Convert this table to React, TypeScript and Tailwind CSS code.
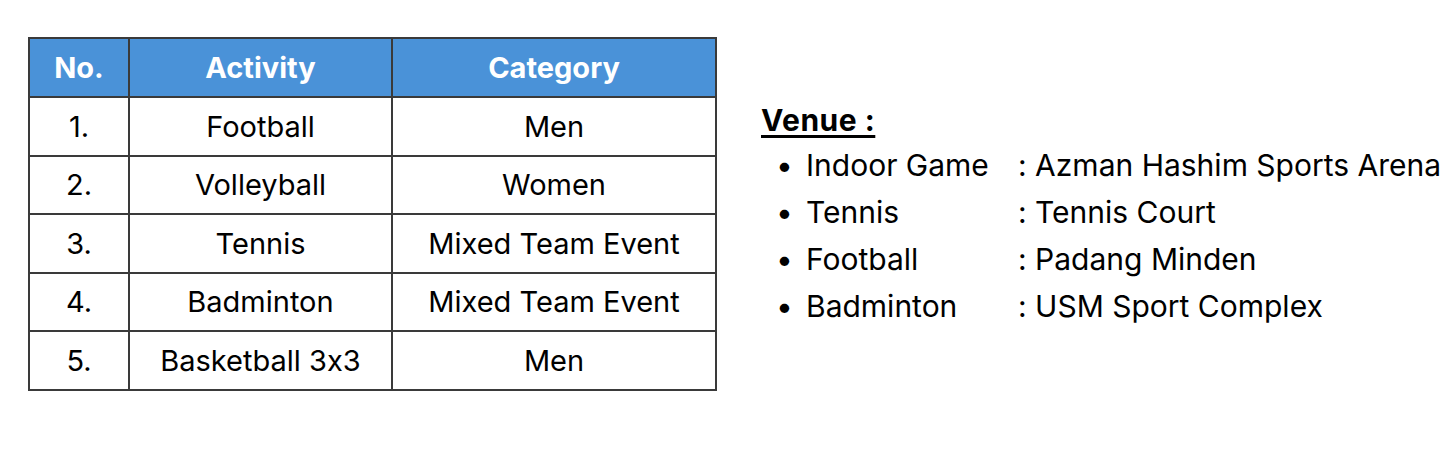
const rows = [
  { no: "1.", activity: "Football", category: "Men" },
  { no: "2.", activity: "Volleyball", category: "Women" },
  { no: "3.", activity: "Tennis", category: "Mixed Team Event" },
  { no: "4.", activity: "Badminton", category: "Mixed Team Event" },
  { no: "5.", activity: "Basketball 3x3", category: "Men" },
];

const venues = [
  { name: "Indoor Game", place: "Azman Hashim Sports Arena" },
  { name: "Tennis", place: "Tennis Court" },
  { name: "Football", place: "Padang Minden" },
  { name: "Badminton", place: "USM Sport Complex" },
];

export default function App() {
  return (
    <div
      className="flex h-[458px] w-[1454px] items-start overflow-hidden bg-white text-black [font-feature-settings:'calt'_0]"
      style={{ fontFamily: "Inter, 'Open Sans', sans-serif" }}
    >
      <table className="ml-[28px] mt-[37px] border-collapse border-2 border-[#3a3a3a] text-[29px]">
        <thead>
          <tr className="h-[59px] bg-[#4a92d8] text-white">
            <th className="w-[100px] border-2 border-[#3a3a3a] font-bold">No.</th>
            <th className="w-[263px] border-2 border-[#3a3a3a] font-bold">Activity</th>
            <th className="w-[324px] border-2 border-[#3a3a3a] font-bold">Category</th>
          </tr>
        </thead>
        <tbody>
          {rows.map((r) => (
            <tr key={r.no} className="h-[58.6px]">
              <td className="border-2 border-[#3a3a3a] text-center">{r.no}</td>
              <td className="border-2 border-[#3a3a3a] text-center">{r.activity}</td>
              <td className="border-2 border-[#3a3a3a] text-center">{r.category}</td>
            </tr>
          ))}
        </tbody>
      </table>

      <div className="ml-[44px] mt-[103px] flex flex-col text-[30px]">
        <div className="font-bold underline underline-offset-4 leading-[34px] tracking-[0.5px]">Venue :</div>
        <ul className="mt-[5px] flex flex-col">
          {venues.map((v) => (
            <li key={v.name} className="flex h-[47px] items-center">
              <span className="w-[45px] pl-[15px]">•</span>
              <span className="w-[212px] whitespace-nowrap">{v.name}</span>
              <span className="whitespace-nowrap">: {v.place}</span>
            </li>
          ))}
        </ul>
      </div>
    </div>
  );
}
